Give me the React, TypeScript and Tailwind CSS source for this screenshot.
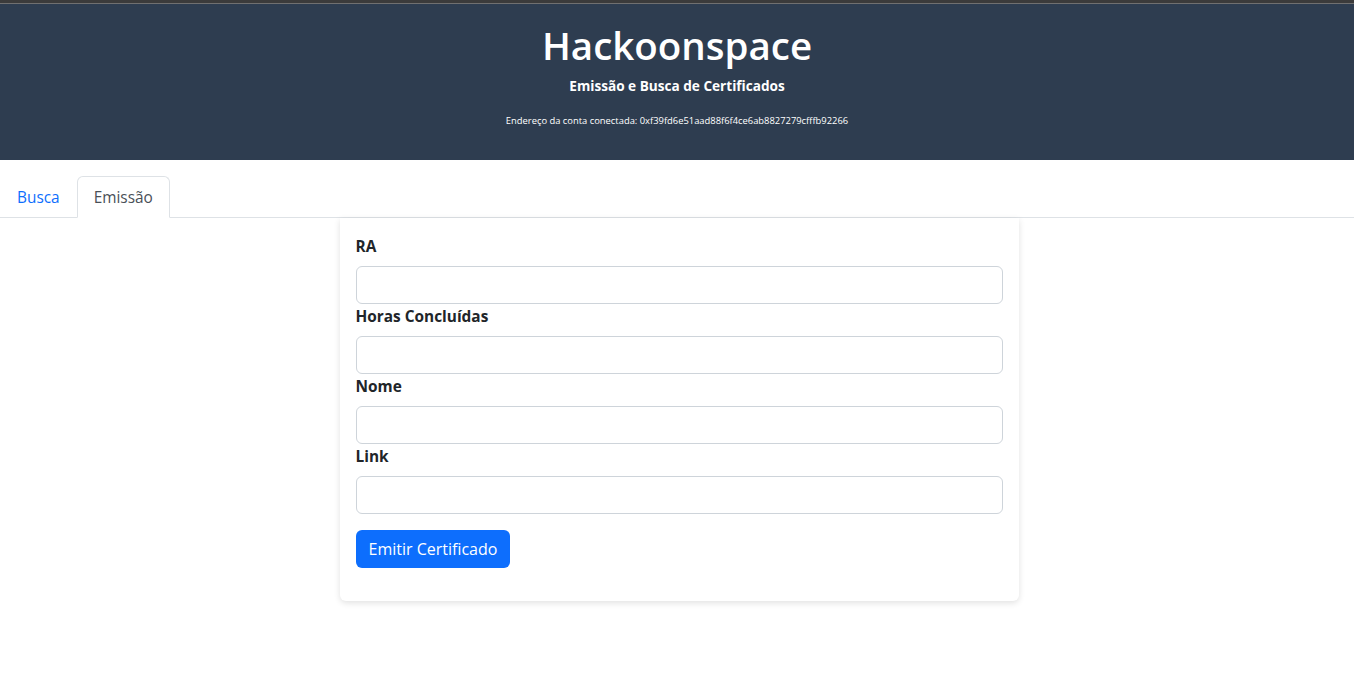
import React from "react";

const font = { fontFamily: '"Open Sans", "Noto Sans", sans-serif' };

function Field({ label }: { label: string }) {
  return (
    <div className="flex flex-col">
      <label className="text-[15.4px] leading-[24px] pt-[1px] h-[24px] font-bold text-[#212529] mb-2">{label}</label>
      <input className="h-[38px] w-full rounded-[6px] border border-[#ced4da] bg-white px-3 outline-none" />
    </div>
  );
}

export default function App() {
  return (
    <div className="min-h-[696px] bg-white text-[#212529]" style={font}>
      <div className="h-[3px] bg-[#3b3b3b]" />
      <div className="h-[1px] bg-[#707070]" />
      <header className="h-[156px] bg-[#2e3d50] text-white flex flex-col items-center">
        <h1 className="mt-[18px] text-[38.5px] leading-[47px] font-semibold">Hackoonspace</h1>
        <h2 className="mt-[6px] text-[13.6px] leading-[21px] font-bold">Emissão e Busca de Certificados</h2>
        <p className="mt-[18px] text-[9.4px] leading-[14px]">Endereço da conta conectada: 0xf39fd6e51aad88f6f4ce6ab8827279cfffb92266</p>
      </header>
      <nav className="mt-4 flex border-b border-[#dee2e6] h-[42px]">
        <a className="px-4 pt-[2px] h-[41px] flex items-center text-[15.4px] text-[#0d6efd] border border-transparent">Busca</a>
        <a className="px-4 pt-[2px] h-[42px] flex items-center text-[15.4px] text-[#495057] bg-white border border-[#dee2e6] border-b-white rounded-t-[6px] -mb-px">Emissão</a>
      </nav>
      <div className="flex justify-center">
        <div className="w-[679px] ml-[4px] bg-white rounded-b-[6px] shadow-[0_2px_6px_rgba(0,0,0,0.12)] p-4 pb-[33px]">
          <div className="flex flex-col">
            <Field label="RA" />
            <Field label="Horas Concluídas" />
            <Field label="Nome" />
            <Field label="Link" />
          </div>
          <button className="mt-4 h-[38px] px-[13px] rounded-[6px] bg-[#0d6efd] text-white text-[16px]">Emitir Certificado</button>
        </div>
      </div>
    </div>
  );
}
